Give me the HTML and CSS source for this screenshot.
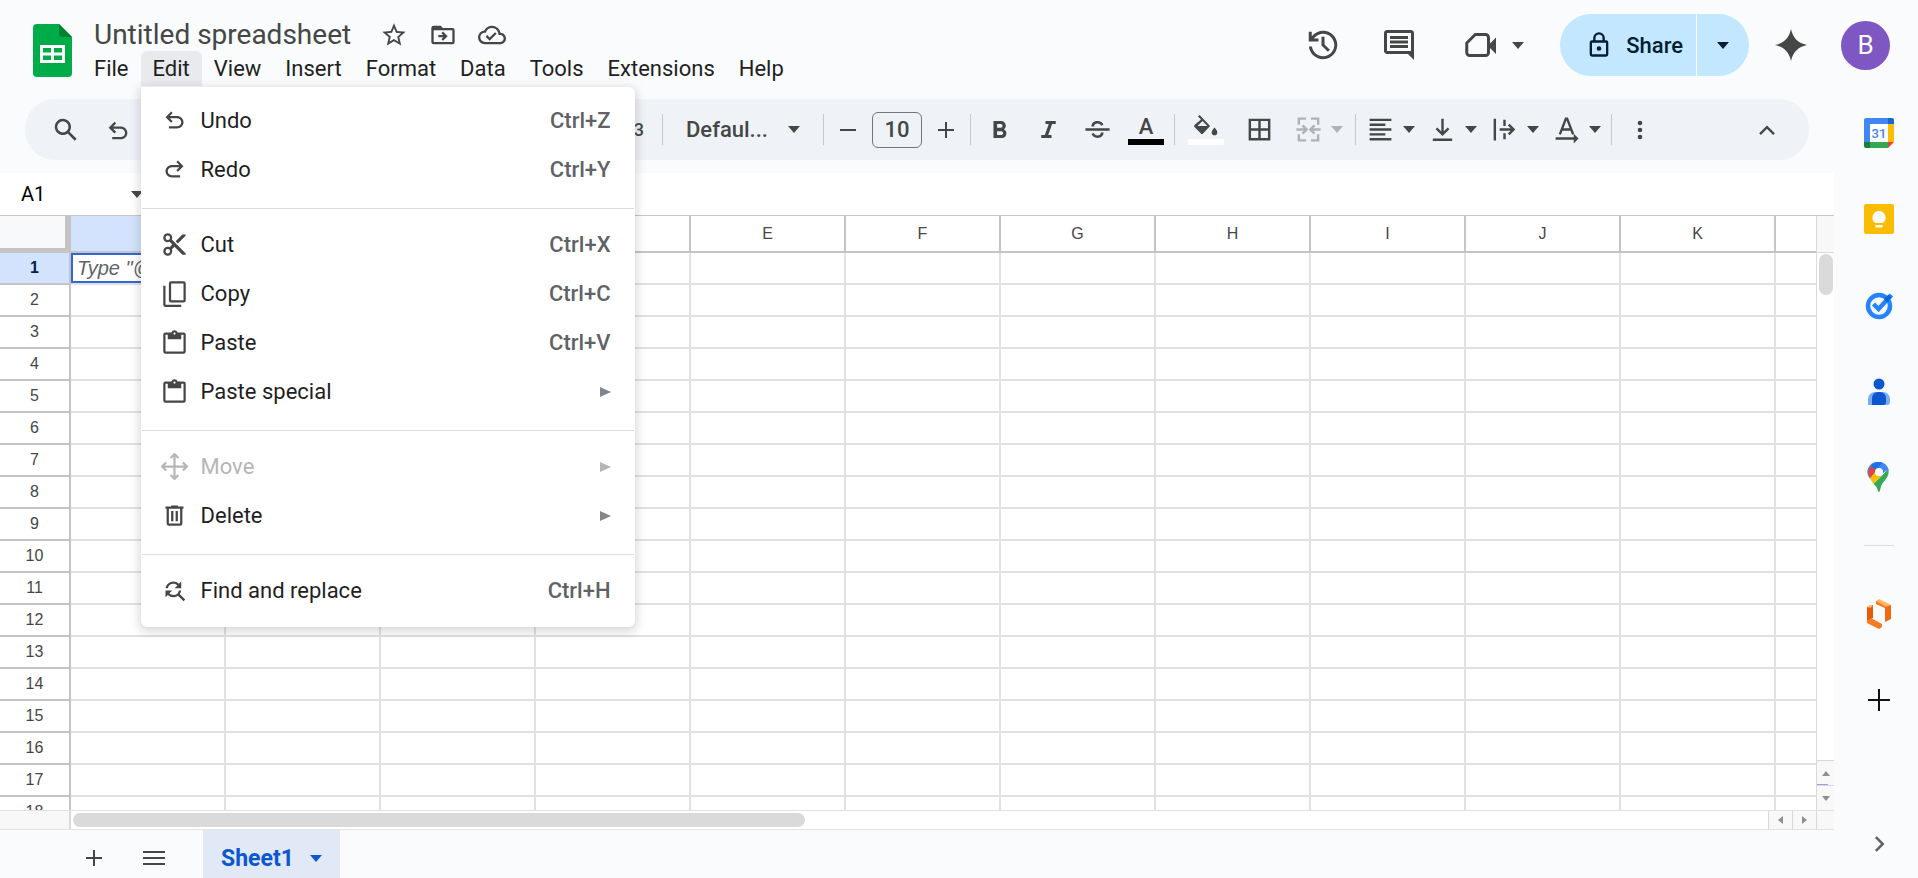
FILE: index.html
```html
<!DOCTYPE html>
<html lang="en">
<head>
    <meta charset="UTF-8">
    <meta name="viewport" content="width=device-width, initial-scale=1.0">
    <title>Untitled spreadsheet</title>
    <link rel="stylesheet" href="styles.css">
</head>
<body>

    <header class="header">
        <a class="logo" href="#" aria-label="Sheets home">
            <svg width="39" height="53" viewBox="0 0 39 53">
                <path d="M4 0h22l13 13v36a4 4 0 0 1-4 4H4a4 4 0 0 1-4-4V4a4 4 0 0 1 4-4z" fill="#00ac47"/>
                <path d="M26 0l13 13H29a3 3 0 0 1-3-3z" fill="#00832d"/>
                <path d="M7 21h25v18H7zM10 24v4.500h8V24zm11 0v4.500h8V24zM10 31.500V36h8v-4.500zm11 0V36h8v-4.500z" fill="#fff" fill-rule="evenodd"/>
            </svg>
        </a>

        <div class="title-area">
            <div class="title-row">
                <h1 class="title">Untitled spreadsheet</h1>
                <button type="button" class="icon-button title-icon" aria-label="Star">
                    <svg width="28" height="28" viewBox="0 0 24 24"><path d="M22 9.240l-7.190-.62L12 2 9.190 8.630 2 9.240l5.460 4.730L5.820 21 12 17.270 18.180 21l-1.630-7.030L22 9.240zM12 15.400l-3.760 2.270 1-4.280-3.320-2.880 4.380-.38L12 6.100l1.710 4.040 4.380.38-3.320 2.880 1 4.280L12 15.400z"/></svg>
                </button>
                <button type="button" class="icon-button title-icon" aria-label="Move">
                    <svg width="28" height="28" viewBox="0 0 24 24"><path d="M20 6h-8l-2-2H4a2 2 0 0 0-2 2v12a2 2 0 0 0 2 2h16a2 2 0 0 0 2-2V8a2 2 0 0 0-2-2zm0 12H4V8h16v10zm-8-1l4-4-4-4-1.400 1.400L12.200 12H8v2h4.200l-1.600 1.600L12 17z"/></svg>
                </button>
                <button type="button" class="icon-button title-icon" aria-label="Document status">
                    <svg width="28" height="28" viewBox="0 0 24 24"><path d="M19.350 10.040A7.490 7.490 0 0 0 12 4C9.110 4 6.600 5.640 5.350 8.040A5.994 5.994 0 0 0 0 14c0 3.310 2.690 6 6 6h13c2.760 0 5-2.240 5-5 0-2.640-2.050-4.780-4.650-4.960zM19 18H6c-2.210 0-4-1.790-4-4s1.790-4 4-4h.71C7.370 7.690 9.480 6 12 6c3.040 0 5.500 2.460 5.500 5.500v.5H19c1.660 0 3 1.340 3 3s-1.340 3-3 3zm-9-3.820l-2.090-2.090L6.500 13.500 10 17l6.010-6.010-1.410-1.410z"/></svg>
                </button>
            </div>

            <nav class="menubar">
                <button type="button" class="menu-button">File</button>
                <div class="menu-holder">
                    <button type="button" class="menu-button open" aria-expanded="true">Edit</button>
                    <div class="dropdown" role="menu">
                        <button type="button" class="menu-item" role="menuitem">
                            <svg viewBox="0 0 24 24"><path d="M7 19v-2h7.100c1.900 0 3.900-1.300 3.900-3.500S16 10 14.100 10H7.800l2.600 2.600L9 14 4 9l5-5 1.400 1.400L7.800 8h6.300c3.200 0 5.900 2.300 5.900 5.500S17.300 19 14.100 19z"/></svg>
                            <span class="label">Undo</span><span class="shortcut">Ctrl+Z</span>
                        </button>
                        <button type="button" class="menu-item" role="menuitem">
                            <svg viewBox="0 0 24 24"><path d="M17 19v-2H9.900C8 17 6 15.700 6 13.500S8 10 9.900 10h6.300l-2.600 2.600L15 14l5-5-5-5-1.400 1.400L16.200 8H9.900C6.700 8 4 10.300 4 13.500S6.700 19 9.900 19z"/></svg>
                            <span class="label">Redo</span><span class="shortcut">Ctrl+Y</span>
                        </button>
                        <hr class="menu-line">
                        <button type="button" class="menu-item" role="menuitem">
                            <svg viewBox="0 0 24 24"><path d="M9.640 7.640c.23-.5.360-1.050.360-1.640a4 4 0 1 0-4 4c.59 0 1.140-.13 1.640-.36L10 12l-2.360 2.360C7.140 14.130 6.590 14 6 14a4 4 0 1 0 4 4c0-.59-.13-1.140-.36-1.640L12 14l7 7h3v-1L9.640 7.640zM6 8a2 2 0 1 1 0-4 2 2 0 0 1 0 4zm0 12a2 2 0 1 1 0-4 2 2 0 0 1 0 4zM19 3l-6 6 2 2 7-7V3z"/></svg>
                            <span class="label">Cut</span><span class="shortcut">Ctrl+X</span>
                        </button>
                        <button type="button" class="menu-item" role="menuitem">
                            <svg viewBox="0 0 24 24"><path d="M20 1H9a2 2 0 0 0-2 2v15a2 2 0 0 0 2 2h11a2 2 0 0 0 2-2V3a2 2 0 0 0-2-2zm0 17H9V3h11v15zM3 5H2v17a2 2 0 0 0 2 2h14v-2H4V5z"/></svg>
                            <span class="label">Copy</span><span class="shortcut">Ctrl+C</span>
                        </button>
                        <button type="button" class="menu-item" role="menuitem">
                            <svg viewBox="0 0 24 24"><path d="M20 3h-5.200a3 3 0 0 0-5.600 0H4a2 2 0 0 0-2 2v15a2 2 0 0 0 2 2h16a2 2 0 0 0 2-2V5a2 2 0 0 0-2-2zm-8 0a1 1 0 1 1 0 2 1 1 0 0 1 0-2zm8 17H4V5h2v4h12V5h2v15z"/></svg>
                            <span class="label">Paste</span><span class="shortcut">Ctrl+V</span>
                        </button>
                        <button type="button" class="menu-item" role="menuitem">
                            <svg viewBox="0 0 24 24"><path d="M20 3h-5.200a3 3 0 0 0-5.600 0H4a2 2 0 0 0-2 2v15a2 2 0 0 0 2 2h16a2 2 0 0 0 2-2V5a2 2 0 0 0-2-2zm-8 0a1 1 0 1 1 0 2 1 1 0 0 1 0-2zm8 17H4V5h2v4h12V5h2v15z"/></svg>
                            <span class="label">Paste special</span><span class="submenu-arrow"></span>
                        </button>
                        <hr class="menu-line">
                        <button type="button" class="menu-item" role="menuitem" disabled>
                            <svg viewBox="0 0 24 24"><path d="M12 1v22M1 12h22M8.500 4.500L12 1l3.500 3.500M8.500 19.500L12 23l3.500-3.500M4.500 8.500L1 12l3.500 3.500M19.500 8.500L23 12l-3.500 3.500" fill="none" stroke="currentColor" stroke-width="2"/></svg>
                            <span class="label">Move</span><span class="submenu-arrow"></span>
                        </button>
                        <button type="button" class="menu-item" role="menuitem">
                            <svg viewBox="0 0 24 24"><path d="M15 4V3H9v1H4v2h1v13a2 2 0 0 0 2 2h10a2 2 0 0 0 2-2V6h1V4h-5zm2 15H7V6h10v13zM9 8h2v9H9zm4 0h2v9h-2z"/></svg>
                            <span class="label">Delete</span><span class="submenu-arrow"></span>
                        </button>
                        <hr class="menu-line">
                        <button type="button" class="menu-item" role="menuitem">
                            <svg viewBox="0 0 24 24"><path d="M11 6c1.380 0 2.630.56 3.540 1.460L12 10h6V4l-2.050 2.050A6.976 6.976 0 0 0 11 4c-3.530 0-6.430 2.610-6.920 6H6.100A5 5 0 0 1 11 6zm5.640 9.140A6.890 6.890 0 0 0 17.920 12H15.900a5 5 0 0 1-4.900 4c-1.380 0-2.630-.56-3.540-1.460L10 12H4v6l2.050-2.050A6.976 6.976 0 0 0 11 18c1.550 0 2.980-.51 4.140-1.360L20 21.490 21.490 20l-4.850-4.860z"/></svg>
                            <span class="label">Find and replace</span><span class="shortcut">Ctrl+H</span>
                        </button>
                    </div>
                </div>
                <button type="button" class="menu-button">View</button>
                <button type="button" class="menu-button">Insert</button>
                <button type="button" class="menu-button">Format</button>
                <button type="button" class="menu-button">Data</button>
                <button type="button" class="menu-button">Tools</button>
                <button type="button" class="menu-button">Extensions</button>
                <button type="button" class="menu-button">Help</button>
            </nav>
        </div>

        <div class="header-actions">
            <button type="button" class="icon-button" aria-label="Version history">
                <svg width="36" height="36" viewBox="0 0 24 24"><path d="M12 21.500a9.500 9.500 0 0 1-9.400-8.500h2a7.500 7.500 0 1 0 1.300-5.300H9v2H2.500V3.200h2v3A9.500 9.500 0 1 1 12 21.500zm3.200-5L11 12.400V6.500h2v5.100l3.600 3.500z"/></svg>
            </button>
            <button type="button" class="icon-button" aria-label="Comments">
                <svg width="36" height="36" viewBox="0 0 24 24"><path d="M21.990 4c0-1.100-.89-2-1.990-2H4c-1.100 0-2 .9-2 2v12c0 1.100.9 2 2 2h14l4 4-.01-18zM20 4v12H4V4h16zM6 12h12v2H6zm0-3h12v2H6zm0-3h12v2H6z"/></svg>
            </button>
            <button type="button" class="icon-button meet" aria-label="Join a call">
                <svg width="36" height="36" viewBox="0 0 24 24"><path d="M8.200 5H15a2 2 0 0 1 2 2v10a2 2 0 0 1-2 2H4.500a2 2 0 0 1-2-2v-6.300z" fill="none" stroke="currentColor" stroke-width="2"/><path d="M17 12l5-5v11l-5-5z"/></svg>
                <span class="caret"></span>
            </button>
            <div class="share">
                <button type="button" class="share-main">
                    <svg width="28" height="28" viewBox="0 0 24 24"><path d="M18 8h-1V6A5 5 0 0 0 7 6v2H6a2 2 0 0 0-2 2v10a2 2 0 0 0 2 2h12a2 2 0 0 0 2-2V10a2 2 0 0 0-2-2zM9 6a3 3 0 0 1 6 0v2H9V6zm9 14H6V10h12v10zm-6-3a2 2 0 1 0 0-4 2 2 0 0 0 0 4z"/></svg>
                    Share
                </button>
                <button type="button" class="share-more" aria-label="Share options"><span class="caret"></span></button>
            </div>
            <button type="button" class="icon-button" aria-label="Gemini">
                <svg width="32" height="32" viewBox="0 0 32 32"><path d="M16 0C18 9 23 14 32 16 23 18 18 23 16 32 14 23 9 18 0 16 9 14 14 9 16 0z"/></svg>
            </button>
            <button type="button" class="avatar" aria-label="Account">B</button>
        </div>
    </header>

    <div class="workspace">
        <main class="main">
            <div class="toolbar">
                <button type="button" class="tool search" aria-label="Search the menus">
                    <svg width="30" height="30" viewBox="0 0 24 24"><path d="M20.500 19l-5.700-5.700a6.500 6.500 0 1 0-1.500 1.500l5.700 5.700zM9.500 14a4.500 4.500 0 1 1 0-9 4.500 4.500 0 0 1 0 9z"/></svg>
                </button>
                <button type="button" class="tool" aria-label="Undo">
                    <svg width="28" height="28" viewBox="0 0 24 24"><path d="M7 20v-2h7.100c1.900 0 3.900-1.300 3.900-3.500S16 11 14.100 11H7.800l2.600 2.600L9 15l-5-5 5-5 1.400 1.400L7.800 9h6.300c3.200 0 5.900 2.300 5.900 5.500S17.300 20 14.100 20z"/></svg>
                </button>
                <div class="number-formats">
                    <button type="button" class="more-formats">123</button>
                </div>
                <span class="divider"></span>
                <button type="button" class="font-picker">Defaul... <span class="caret"></span></button>
                <span class="divider"></span>
                <div class="size-group">
                    <button type="button" class="step" aria-label="Decrease font size">
                        <svg width="18" height="18" viewBox="0 0 18 18"><path d="M1 8h16v2H1z"/></svg>
                    </button>
                    <input class="size-input" type="text" value="10" aria-label="Font size">
                    <button type="button" class="step" aria-label="Increase font size">
                        <svg width="18" height="18" viewBox="0 0 18 18"><path d="M1 8h7V1h2v7h7v2h-7v7H8v-7H1z"/></svg>
                    </button>
                </div>
                <span class="divider"></span>
                <div class="style-group">
                    <button type="button" class="tool" aria-label="Bold">
                        <svg width="29" height="29" viewBox="0 0 24 24"><path d="M15.600 11.790c.97-.67 1.650-1.770 1.650-2.790 0-2.260-1.750-4-4-4H7v14h7.040c2.090 0 3.710-1.700 3.710-3.790 0-1.520-.86-2.820-2.150-3.420zM10 7.500h3a1.500 1.500 0 0 1 0 3h-3v-3zm3.500 9H10v-3h3.500a1.500 1.500 0 0 1 0 3z"/></svg>
                    </button>
                    <button type="button" class="tool" aria-label="Italic">
                        <svg width="29" height="29" viewBox="0 0 24 24"><path d="M9.500 5v2.500h2.700L9 16.500H6V19h8.500v-2.500h-2.700l3.200-9h3V5z"/></svg>
                    </button>
                    <button type="button" class="tool" aria-label="Strikethrough">
                        <svg width="29" height="29" viewBox="0 0 24 24"><path d="M2 11h20v2H2zM7 9.500C7 6.500 9.300 5 12 5c2.400 0 4.200 1.100 4.900 3l-2 .9C14.500 7.700 13.500 7 12 7c-1.700 0-2.800.8-2.800 2.500zM17 14.500c0 3-2.300 4.500-5 4.500-2.400 0-4.300-1.200-5-3.200l2-.9c.4 1.300 1.500 2.100 3 2.100 1.700 0 2.800-.8 2.800-2.500z"/></svg>
                    </button>
                    <button type="button" class="tool color-tool" aria-label="Text color">
                        <span class="color-letter">A</span>
                        <span class="swatch black"></span>
                    </button>
                </div>
                <span class="divider"></span>
                <div class="cell-group">
                    <button type="button" class="tool color-tool" aria-label="Fill color">
                        <svg width="26" height="24" viewBox="0 0 26 24"><path d="M5 1.500L6.600 0l10.500 11-7 7.500a1.500 1.500 0 0 1-2.200 0L1.500 12a1.500 1.500 0 0 1 0-2L8 4.500zM9.500 6L4.500 11h9.800z" fill-rule="evenodd"/><path d="M21.500 12.500s2.800 3 2.800 4.900a2.800 2.800 0 0 1-5.600 0c0-1.900 2.800-4.900 2.800-4.900z"/></svg>
                        <span class="swatch white"></span>
                    </button>
                    <button type="button" class="tool" aria-label="Borders">
                        <svg width="29" height="29" viewBox="0 0 24 24"><path d="M3 3v18h18V3H3zm8 16H5v-6h6v6zm0-8H5V5h6v6zm8 8h-6v-6h6v6zm0-8h-6V5h6v6z"/></svg>
                    </button>
                    <button type="button" class="tool-select" aria-label="Merge cells" disabled>
                        <svg width="29" height="29" viewBox="0 0 24 24"><path d="M10 3H4v5M14 3h6v5M10 21H4v-5M14 21h6v-5M2 12h8M22 12h-8M7 8.500l3.500 3.500L7 15.500M17 8.500L13.500 12l3.500 3.500" fill="none" stroke="currentColor" stroke-width="2"/></svg>
                        <span class="caret"></span>
                    </button>
                </div>
                <span class="divider"></span>
                <div class="align-group">
                    <button type="button" class="tool-select" aria-label="Horizontal align">
                        <svg width="29" height="29" viewBox="0 0 24 24"><path d="M3 3h18v2H3zm0 4h13v2H3zm0 4h18v2H3zm0 4h13v2H3zm0 4h18v2H3z"/></svg>
                        <span class="caret"></span>
                    </button>
                    <button type="button" class="tool-select" aria-label="Vertical align">
                        <svg width="29" height="29" viewBox="0 0 24 24"><path d="M12 3v12.500M7 11l5 5 5-5M4 20.500h16" fill="none" stroke="currentColor" stroke-width="2"/></svg>
                        <span class="caret"></span>
                    </button>
                    <button type="button" class="tool-select" aria-label="Text wrapping">
                        <svg width="29" height="29" viewBox="0 0 24 24"><path d="M4 3v18M12 4v5M12 15v5M8 12h11.500M15.500 8l4 4-4 4" fill="none" stroke="currentColor" stroke-width="2"/></svg>
                        <span class="caret"></span>
                    </button>
                    <button type="button" class="tool-select" aria-label="Text rotation">
                        <svg width="29" height="29" viewBox="0 0 24 24"><path d="M6.500 16L11.500 3h1l5 13M8.500 12h7M3 19.500h16" fill="none" stroke="currentColor" stroke-width="2"/><path d="M18 15.500l4 4-4 4z"/></svg>
                        <span class="caret"></span>
                    </button>
                </div>
                <span class="divider"></span>
                <button type="button" class="tool" aria-label="More">
                    <svg width="28" height="28" viewBox="0 0 24 24"><path d="M12 8a2 2 0 1 0 0-4 2 2 0 0 0 0 4zm0 6a2 2 0 1 0 0-4 2 2 0 0 0 0 4zm0 6a2 2 0 1 0 0-4 2 2 0 0 0 0 4z"/></svg>
                </button>
                <button type="button" class="tool hide-menus" aria-label="Hide the menus">
                    <svg width="28" height="28" viewBox="0 0 24 24"><path d="M6 15.500l6-6 6 6" fill="none" stroke="currentColor" stroke-width="2"/></svg>
                </button>
            </div>

            <div class="name-row">
                <input class="name-box" type="text" value="A1" aria-label="Name box">
                <span class="caret"></span>
            </div>

            <div class="sheet">
                <div class="viewport">
                    <table class="grid" id="grid">
                        <thead><tr><th class="corner"></th></tr></thead>
                        <tbody></tbody>
                    </table>
                </div>
                <div class="vscroll">
                    <div class="vscroll-top"></div>
                    <div class="vthumb"></div>
                    <button type="button" class="scroll-button up" aria-label="Scroll up"></button>
                    <button type="button" class="scroll-button down" aria-label="Scroll down"></button>
                </div>
            </div>

            <div class="hscroll">
                <div class="hscroll-head"></div>
                <div class="htrack"><div class="hthumb"></div></div>
                <button type="button" class="scroll-button left" aria-label="Scroll left"></button>
                <button type="button" class="scroll-button right" aria-label="Scroll right"></button>
                <div class="hscroll-end"></div>
            </div>

            <footer class="tabs">
                <button type="button" class="tab-tool" aria-label="Add sheet">
                    <svg width="18" height="18" viewBox="0 0 18 18"><path d="M1 8h7V1h2v7h7v2h-7v7H8v-7H1z"/></svg>
                </button>
                <button type="button" class="tab-tool" aria-label="All sheets">
                    <svg width="22" height="16" viewBox="0 0 22 16"><path d="M0 1h22v2H0zm0 6h22v2H0zm0 6h22v2H0z"/></svg>
                </button>
                <button type="button" class="sheet-tab">Sheet1 <span class="caret"></span></button>
            </footer>
        </main>

        <aside class="side-panel">
            <button type="button" class="side-app" aria-label="Calendar">
                <svg width="30" height="30" viewBox="0 0 30 30">
                    <path d="M2 0h22v6H6v18H0V2a2 2 0 0 1 2-2z" fill="#4285f4"/>
                    <path d="M24 0h4a2 2 0 0 1 2 2v4h-6z" fill="#1967d2"/>
                    <path d="M24 6h6v18h-6z" fill="#fbbc04"/>
                    <path d="M6 24h18v6H6z" fill="#34a853"/>
                    <path d="M0 24h6v6H2a2 2 0 0 1-2-2z" fill="#188038"/>
                    <path d="M24 24h6l-6 6z" fill="#ea4335"/>
                    <path d="M6 6h18v18H6z" fill="#fff"/>
                    <text class="calendar-day" x="15" y="20" text-anchor="middle">31</text>
                </svg>
            </button>
            <button type="button" class="side-app" aria-label="Keep">
                <svg width="30" height="30" viewBox="0 0 30 30">
                    <rect width="30" height="30" rx="2" fill="#fbbc04"/>
                    <path d="M15 7a6.500 6.500 0 0 1 3.500 12h-7A6.500 6.500 0 0 1 15 7zM11.500 21h7v2.500h-7z" fill="#fff"/>
                </svg>
            </button>
            <button type="button" class="side-app" aria-label="Tasks">
                <svg width="30" height="30" viewBox="0 0 30 30">
                    <circle cx="15" cy="16" r="11" fill="none" stroke="#2684fc" stroke-width="4.500"/>
                    <path d="M9.500 14l5 5L27.500 5" fill="none" stroke="#2684fc" stroke-width="4.500"/>
                    <path d="M20 9l4.500-4.500 3 3-4.500 5z" fill="#0066da"/>
                </svg>
            </button>
            <button type="button" class="side-app" aria-label="Contacts">
                <svg width="30" height="30" viewBox="0 0 30 30">
                    <circle cx="15" cy="8" r="5.500" fill="#0b57d0"/>
                    <path d="M4 29v-6a7 7 0 0 1 7-7h8a7 7 0 0 1 7 7v3a3 3 0 0 1-3 3z" fill="#7baaf7"/>
                    <path d="M8 29v-7a6 6 0 0 1 6-6h2a6 6 0 0 1 6 6v4a3 3 0 0 1-3 3z" fill="#0b57d0"/>
                </svg>
            </button>
            <button type="button" class="side-app" aria-label="Maps">
                <svg width="30" height="30" viewBox="0 0 30 30">
                    <path d="M15 0a10 10 0 0 1 9.600 7.300L8.300 18.500A10 10 0 0 1 15 0z" fill="#4285f4"/>
                    <path d="M15 0a10 10 0 0 1 3.500.6L11 9 7 4a10 10 0 0 1 8-4z" fill="#1a73e8"/>
                    <path d="M7 4l5 4.500L6 16A10 10 0 0 1 7 4z" fill="#ea4335"/>
                    <path d="M6 16l7-8 5 5-8.500 9A40 40 0 0 1 6 16z" fill="#fbbc04"/>
                    <path d="M24.500 7c1.500 8-5 12-7 16-1.200 2.500-1.200 7-2.500 7s-1.300-3.500-3-5.500c-.8-1-1.700-2-2.500-2.500z" fill="#34a853"/>
                    <circle cx="15" cy="10" r="4" fill="#fff"/>
                </svg>
            </button>
            <hr class="side-line">
            <button type="button" class="side-app" aria-label="Add-on">
                <svg width="30" height="30" viewBox="0 0 30 30">
                    <path d="M3 8l6-2v13l-6 3z" fill="#e8590c"/>
                    <path d="M3 22l4-3 11 6v3l-3 2-12-6z" fill="#f57c1f"/>
                    <path d="M12 2l3-2 12 6-6 3-9-4z" fill="#ffb46a"/>
                    <path d="M12 2l9 5v2l-9-4z" fill="#f57c1f"/>
                    <path d="M21 8l6-2v14l-6 3z" fill="#f0690f"/>
                    <path d="M3 8l3-2 3 1-3 2z" fill="#ffb46a"/>
                </svg>
            </button>
            <button type="button" class="side-app" aria-label="Get add-ons">
                <svg width="22" height="22" viewBox="0 0 22 22"><path d="M0 10h10V0h2v10h10v2H12v10h-2V12H0z" fill="#111"/></svg>
            </button>
            <button type="button" class="side-toggle" aria-label="Hide side panel">
                <svg width="30" height="30" viewBox="0 0 24 24"><path d="M9.500 6.500l5.500 5.500-5.500 5.500" fill="none" stroke="currentColor" stroke-width="2"/></svg>
            </button>
        </aside>
    </div>

    <script>
        // Build the column letters and the numbered rows
        var columns = 'ABCDEFGHIJK'.split('');
        columns.push(''); // filler column up to the scrollbar
        var rowCount = 18;
        var headRow = document.querySelector('#grid thead tr');
        var body = document.querySelector('#grid tbody');

        columns.forEach(function(letter, index) {
            var th = document.createElement('th');
            th.textContent = letter;
            th.className = index === 0 ? 'col-head selected' : 'col-head';
            headRow.appendChild(th);
        });

        for (var i = 1; i <= rowCount; i++) {
            var row = body.insertRow();
            var head = document.createElement('th');
            head.textContent = i;
            head.className = i === 1 ? 'row-head selected' : 'row-head';
            row.appendChild(head);
            columns.forEach(function() {
                row.insertCell();
            });
        }

        // A1 is the active cell
        var active = body.rows[0].cells[1];
        active.className = 'active';
        active.textContent = 'Type "@"';
    </script>
</body>
</html>
```

FILE: styles.css
```css
* {
    box-sizing: border-box;
}

body {
    margin: 0;
    height: 100vh;
    display: flex;
    flex-direction: column;
    overflow: hidden;
    background-color: #f9fbfd;
    color: #1f1f1f;
    font-family: Roboto, Arial, sans-serif;
    font-size: 22px;
}

button, input {
    margin: 0;
    padding: 0;
    border: none;
    background: none;
    color: inherit;
    font: inherit;
}

button {
    cursor: pointer;
}

svg {
    display: block;
    flex: none;
    fill: currentColor;
}

.caret {
    flex: none;
    border: 6px solid transparent;
    border-top: 7px solid currentColor;
    border-bottom: none;
}

/* Header */
.header {
    display: flex;
    height: 87px;
    flex: none;
    padding-left: 33px;
}

.logo {
    padding-top: 24px;
    margin-right: 10px;
}

.title-area {
    display: flex;
    flex-direction: column;
}

.title-row {
    display: flex;
    align-items: center;
    height: 51px;
    padding: 18px 0 0 12px;
}

.title {
    margin: 0 29px 0 0;
    font-size: 28px;
    line-height: 34px;
    font-weight: 400;
    color: #444746;
}

.icon-button {
    display: flex;
    align-items: center;
    color: #444746;
}

.title-icon {
    margin-right: 21px;
}

.menubar {
    display: flex;
    height: 36px;
}

.menu-holder {
    position: relative;
}

.menu-button {
    height: 35px;
    padding: 0 12px;
    border-radius: 6px 6px 0 0;
}

.menu-button.open {
    background-color: #e8eaed;
}

.dropdown {
    position: absolute;
    z-index: 10;
    top: 36px;
    left: 0;
    width: 494px;
    padding: 9px 0 12px;
    background-color: #fff;
    border-radius: 0 6px 6px 6px;
    box-shadow: 0 3px 10px 2px rgba(60, 64, 67, 0.2);
}

.menu-item {
    display: flex;
    align-items: center;
    width: 100%;
    height: 49px;
    padding: 0 24px 0 20px;
    text-align: left;
}

.menu-item svg {
    width: 27px;
    height: 27px;
    color: #444746;
}

.menu-item .label {
    flex: 1;
    margin-left: 13px;
}

.menu-item .shortcut {
    font-weight: 500;
    color: #5f6368;
}

.menu-item:disabled,
.menu-item:disabled svg {
    color: #b4b6b8;
}

.submenu-arrow {
    border: 5px solid transparent;
    border-left: 11px solid #80868b;
    border-right: none;
}

.menu-item:disabled .submenu-arrow {
    border-left-color: #b4b6b8;
}

.menu-line {
    margin: 14px 1px 11px;
    border: none;
    border-top: 1px solid #dadce0;
}

.header-actions {
    display: flex;
    align-items: center;
    height: 76px;
    margin-left: auto;
    padding: 14px 28px 0 0;
}

.header-actions .icon-button {
    margin-right: 40px;
}

.header-actions .meet {
    gap: 13px;
    margin-left: 6px;
    margin-right: 36px;
}

.share {
    display: flex;
    gap: 1px;
    height: 62px;
    margin-right: 26px;
    color: #001d35;
}

.share-main,
.share-more {
    display: flex;
    align-items: center;
    background-color: #c2e7ff;
}

.share-main {
    gap: 13px;
    padding: 0 13px 0 25px;
    border-radius: 31px 0 0 31px;
    font-weight: 500;
}

.share-more {
    padding: 0 20px;
    border-radius: 0 31px 31px 0;
}

.header-actions .share + .icon-button {
    margin-right: 34px;
}

.avatar {
    width: 49px;
    height: 49px;
    border-radius: 50%;
    background-color: #7e57c2;
    color: #fff;
    font-size: 26px;
}

/* Work area */
.workspace {
    display: flex;
    flex: 1;
    min-height: 0;
}

.main {
    display: flex;
    flex-direction: column;
    flex: 1;
    min-width: 0;
}

.toolbar {
    display: flex;
    align-items: center;
    height: 61px;
    flex: none;
    margin: 12px 25px 13px;
    padding: 0 24px 0 23px;
    border-radius: 30px;
    background-color: #eff3f8;
    color: #444746;
}

.tool {
    display: flex;
    align-items: center;
    justify-content: center;
    width: 36px;
    height: 40px;
    flex: none;
}

.search {
    margin-right: 16px;
}

.number-formats {
    display: flex;
    justify-content: flex-end;
    width: 516px;
    padding-right: 8px;
}

.more-formats {
    height: 40px;
    font-size: 18px;
    font-weight: 500;
}

.divider {
    width: 1px;
    height: 31px;
    flex: none;
    margin: 0 10px;
    background-color: #c7c7c7;
}

.font-picker {
    display: flex;
    align-items: center;
    justify-content: space-between;
    width: 140px;
    height: 40px;
    padding: 0 13px;
    font-weight: 500;
}

.size-group {
    display: flex;
    align-items: center;
    gap: 10px;
}

.step {
    display: flex;
    align-items: center;
    justify-content: center;
    width: 28px;
    height: 36px;
}

.size-input {
    width: 50px;
    height: 36px;
    border: 1px solid #747775;
    border-radius: 6px;
    text-align: center;
    font-weight: 500;
}

.style-group {
    display: flex;
    gap: 13px;
}

.color-tool {
    flex-direction: column;
    justify-content: flex-end;
}

.color-letter {
    line-height: 24px;
    font-weight: 500;
}

.swatch {
    width: 36px;
    height: 6px;
    margin-bottom: 5px;
}

.swatch.black {
    background-color: #000;
}

.swatch.white {
    background-color: #fff;
}

.cell-group {
    display: flex;
    gap: 17px;
    padding: 0 2px 0 3px;
}

.align-group {
    display: flex;
    gap: 13px;
}

.tool-select {
    display: flex;
    align-items: center;
    gap: 8px;
    height: 40px;
}

.tool-select:disabled {
    color: #b0b3b5;
}

.hide-menus {
    margin-left: auto;
}

.name-row {
    display: flex;
    align-items: center;
    height: 43px;
    flex: none;
    padding-left: 21px;
    background-color: #fff;
    border-bottom: 1px solid #c7c7c7;
    color: #444746;
}

.name-box {
    width: 110px;
    color: #000;
    font-size: 20px;
}

/* Grid */
.sheet {
    display: flex;
    flex: 1;
    min-height: 0;
    background-color: #fff;
}

.viewport {
    flex: 1;
    min-width: 0;
    overflow: hidden;
}

.grid {
    border-collapse: separate;
    border-spacing: 0;
    font-family: "Liberation Sans", Arial, sans-serif;
    font-size: 16px;
    color: #444746;
}

.grid th, .grid td {
    height: 32px;
    padding: 0;
    border: solid #e1e1e1;
    border-width: 0 2px 2px 0;
    line-height: 20px;
}

.grid th {
    border-color: #c4c4c4;
    font-weight: 400;
    text-align: center;
}

.grid .corner {
    min-width: 71px;
    height: 37px;
    border-width: 0 6px 5px 0;
    background-color: #f8f9fa;
}

.grid .col-head {
    min-width: 155px;
}

.grid .selected {
    background-color: #d3e3fd;
}

.grid .row-head.selected {
    font-weight: 700;
    color: #041e49;
}

.grid .active {
    padding-left: 6px;
    box-shadow: inset 0 0 0 2px #3367d6;
    font-size: 20px;
    font-style: italic;
    color: #5f6368;
}

/* Scrollbars */
.vscroll {
    display: flex;
    flex-direction: column;
    width: 18px;
    flex: none;
    border-left: 1px solid #d9d9d9;
}

.vscroll-top {
    height: 37px;
    background-color: #f8f8f8;
    border-bottom: 1px solid #d9d9d9;
}

.vthumb {
    width: 14px;
    height: 41px;
    margin: 1px 1px auto 2px;
    border-radius: 7px;
    background-color: #dadada;
}

.scroll-button {
    display: flex;
    align-items: center;
    justify-content: center;
    height: 25px;
    background-color: #f8f8f8;
    border-top: 1px solid #d9d9d9;
}

.scroll-button::before {
    content: "";
    border: 4px solid transparent;
}

.scroll-button.up {
    background-image: linear-gradient(#8ea9e0, #8ea9e0);
    background-position: left bottom;
    background-size: 11px 1px;
    background-repeat: no-repeat;
}

.scroll-button.up::before {
    border-top: none;
    border-bottom: 5px solid #8f8f8f;
}

.scroll-button.down::before {
    border-bottom: none;
    border-top: 5px solid #8f8f8f;
}

.hscroll {
    display: flex;
    height: 20px;
    flex: none;
    background-color: #fff;
    border-top: 1px solid #e1e1e1;
    border-bottom: 1px solid #e1e1e1;
}

.hscroll-head {
    width: 71px;
    background-color: #f8f8f8;
    border-right: 2px solid #d9d9d9;
}

.htrack {
    flex: 1;
    padding: 2px;
}

.hthumb {
    width: 732px;
    max-width: 100%;
    height: 14px;
    border-radius: 7px;
    background-color: #dadada;
}

.hscroll .scroll-button {
    width: 24px;
    height: 18px;
    border-top: none;
    border-left: 1px solid #d9d9d9;
}

.scroll-button.left::before {
    border-left: none;
    border-right: 5px solid #8f8f8f;
}

.scroll-button.right::before {
    border-right: none;
    border-left: 5px solid #8f8f8f;
}

.hscroll-end {
    width: 18px;
    background-color: #f8f8f8;
    border-left: 1px solid #d9d9d9;
}

/* Sheet tabs */
.tabs {
    display: flex;
    height: 48px;
    flex: none;
    padding-left: 64px;
}

.tab-tool {
    display: flex;
    align-items: center;
    justify-content: center;
    width: 60px;
    padding-top: 8px;
    color: #444746;
}

.sheet-tab {
    display: flex;
    align-items: center;
    gap: 16px;
    margin-left: 19px;
    padding: 8px 18px 0;
    background-color: #e1e9f7;
    color: #0b57d0;
    font-size: 23px;
    font-weight: 700;
}

/* Side panel */
.side-panel {
    display: flex;
    flex-direction: column;
    align-items: center;
    width: 84px;
    flex: none;
    padding: 3px 0 0 5px;
    color: #5f6368;
}

.side-app {
    display: flex;
    align-items: center;
    justify-content: center;
    width: 60px;
    height: 86px;
}

.calendar-day {
    font-size: 13px;
    font-weight: 500;
    fill: #4285f4;
}

.side-line {
    width: 30px;
    margin: 25px 0;
    border: none;
    border-top: 1px solid #dadce0;
}

.side-toggle {
    display: flex;
    align-items: center;
    justify-content: center;
    width: 60px;
    height: 68px;
    margin-top: auto;
}
```
